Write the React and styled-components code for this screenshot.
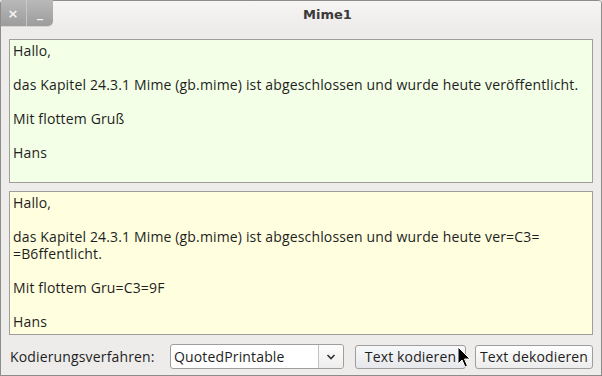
import React from "react";
import styled, { createGlobalStyle } from "styled-components";

const Global = createGlobalStyle`
  html, body { margin: 0; padding: 0; background: #edeceb; }
  body { font-family: "Open Sans", "DejaVu Sans", sans-serif; }
`;

const Window = styled.div`
  position: relative;
  width: 602px;
  height: 376px;
  box-sizing: border-box;
  border: 1px solid #8c8c8c;
  border-top: none;
  border-radius: 4px 4px 0 0;
  background: #edeceb;
  display: flex;
  flex-direction: column;
  overflow: hidden;
`;

const TitleBar = styled.div`
  height: 28px;
  flex: none;
  display: flex;
  align-items: flex-start;
  background: linear-gradient(#f6f5f4, #edeceb);
  border-top: 1px solid #8c8c8c;
  border-radius: 4px 4px 0 0;
  margin: 0 -1px;
`;

const Controls = styled.div`
  display: flex;
  height: 26px;
  width: 53px;
  margin-top: -1px;
  border-bottom-right-radius: 5px;
  overflow: hidden;
  background: linear-gradient(#b9b9b9, #9c9c9c);
  box-shadow: 0 1px 0 #d6d6d6;
`;

const CtlButton = styled.div`
  width: 26px;
  display: flex;
  align-items: center;
  justify-content: center;
  color: #f4f4f4;
  font-family: "DejaVu Sans", sans-serif;
  font-weight: bold;
  font-size: ${(p) => p.$size}px;
  border-right: ${(p) => (p.$sep ? "1px solid #c6c6c6" : "none")};
`;

const Title = styled.div`
  flex: 1;
  text-align: center;
  font-family: "DejaVu Sans", sans-serif;
  font-weight: bold;
  font-size: 13px;
  line-height: 28px;
  color: #3a3a3a;
`;

const Body = styled.div`
  flex: 1;
  display: flex;
  flex-direction: column;
  gap: 8px;
  padding: 10px 8px 0 8px;
  font-size: 14px;
  letter-spacing: 0.15px;
`;

const Pane = styled.div`
  height: 144px;
  box-sizing: border-box;
  border: 1px solid #a09e9b;
  background: ${(p) => p.$bg};
  padding: 2px 3px;
  line-height: 17px;
  color: #1e1e1e;
  white-space: pre-wrap;
  overflow: hidden;
`;

const Footer = styled.div`
  display: flex;
  align-items: center;
  height: 25px;
  margin-top: 1px;
  padding-left: 1px;
`;

const Label = styled.div`
  color: #1e1e1e;
  width: 160px;
`;

const Combo = styled.div`
  width: 174px;
  height: 25px;
  box-sizing: border-box;
  border: 1px solid #a09e9b;
  border-radius: 3px;
  background: #fff;
  display: flex;
  color: #1e1e1e;
`;

const ComboText = styled.div`
  flex: 1;
  padding-left: 3px;
  line-height: 23px;
`;

const ComboArrow = styled.div`
  width: 24px;
  border-left: 1px solid #c4c2bf;
  display: flex;
  align-items: center;
  justify-content: center;
  background: linear-gradient(#fdfdfd, #ededed);
  border-radius: 0 3px 3px 0;
`;

const Button = styled.div`
  height: 24px;
  box-sizing: border-box;
  margin-left: ${(p) => p.$ml}px;
  width: ${(p) => p.$w}px;
  border: 1px solid #a09e9b;
  border-radius: 3px;
  background: ${(p) =>
    p.$hover
      ? "linear-gradient(#f7f8fa, #e6e8ec)"
      : "linear-gradient(#ffffff, #ececec)"};
  line-height: 22px;
  text-align: center;
  color: #1e1e1e;
  white-space: nowrap;
`;

const Cursor = styled.svg`
  position: absolute;
  left: 456px;
  top: 346px;
`;

const text1 = `Hallo,

das Kapitel 24.3.1 Mime (gb.mime) ist abgeschlossen und wurde heute veröffentlicht.

Mit flottem Gruß

Hans`;

const text2 = `Hallo,

das Kapitel 24.3.1 Mime (gb.mime) ist abgeschlossen und wurde heute ver=C3=
=B6ffentlicht.

Mit flottem Gru=C3=9F

Hans`;

export default function App() {
  return (
    <>
      <Global />
      <Window>
        <TitleBar>
          <Controls>
            <CtlButton $sep $size={13}>×</CtlButton>
            <CtlButton $size={12}>_</CtlButton>
          </Controls>
          <Title>Mime1</Title>
        </TitleBar>
        <Body>
          <Pane $bg="#f3ffe6">{text1}</Pane>
          <Pane $bg="#ffffdf">{text2}</Pane>
          <Footer>
            <Label>Kodierungsverfahren:</Label>
            <Combo>
              <ComboText>QuotedPrintable</ComboText>
              <ComboArrow>
                <svg width="10" height="6" viewBox="0 0 10 6">
                  <path d="M1.5 1 L5 4.5 L8.5 1" fill="none" stroke="#333" strokeWidth="1.6" />
                </svg>
              </ComboArrow>
            </Combo>
            <Button $ml={11} $w={111} $hover>Text kodieren</Button>
            <Button $ml={9} $w={118}>Text dekodieren</Button>
          </Footer>
        </Body>
        <Cursor width="14" height="24" viewBox="0 0 14 24">
          <path d="M1 1 L1 18 L5 14 L8 21 L10.5 20 L7.5 13 L13 13 Z" fill="#000" stroke="#fff" strokeWidth="1" strokeLinejoin="round" />
        </Cursor>
      </Window>
    </>
  );
}
